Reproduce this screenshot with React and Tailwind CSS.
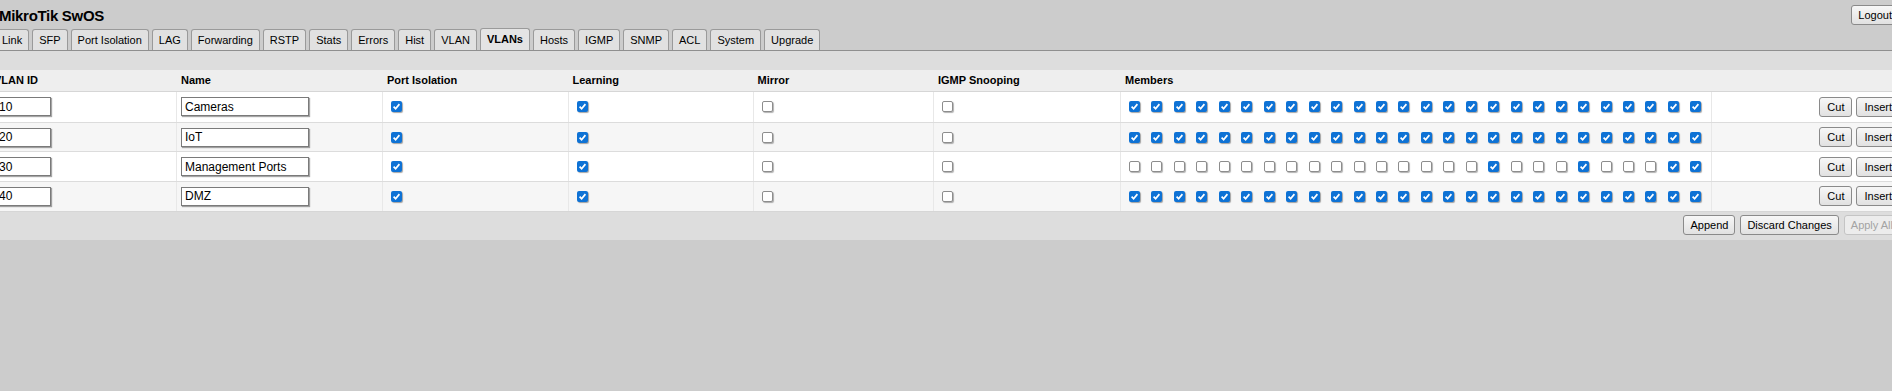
import React from "react";

const TABS = ["Link","SFP","Port Isolation","LAG","Forwarding","RSTP","Stats","Errors","Hist","VLAN","VLANs","Hosts","IGMP","SNMP","ACL","System","Upgrade"];

const ALL = Array(26).fill(true);
const ROW3 = Array.from({ length: 26 }, (_, i) => i === 16 || i === 20 || i === 24 || i === 25);

const ROWS = [
  { id: "10", name: "Cameras", members: ALL },
  { id: "20", name: "IoT", members: ALL },
  { id: "30", name: "Management Ports", members: ROW3 },
  { id: "40", name: "DMZ", members: ALL },
];

const GRID = "grid grid-cols-[187px_206px_185.5px_185px_180.5px_187px_591px_1fr]";

function Cb({ checked }) {
  if (checked) {
    return (
      <span className="inline-flex w-[11px] h-[11px] rounded-[2px] bg-[#0e72d5] shadow-[1px_1px_1px_rgba(0,0,0,0.35)] items-center justify-center shrink-0">
        <svg width="9" height="9" viewBox="0 0 9 9">
          <path d="M1.6 4.7 L3.6 6.7 L7.4 2.1" stroke="white" strokeWidth="1.7" fill="none" />
        </svg>
      </span>
    );
  }
  return (
    <span className="inline-block w-[11px] h-[11px] rounded-[2px] bg-white border border-[#8d8d8d] shadow-[1px_1px_1px_rgba(0,0,0,0.3)] shrink-0" />
  );
}

function Btn({ children, disabled, className = "" }) {
  return (
    <span
      className={
        "inline-flex items-center h-[20px] rounded-[3px] border text-[11px] leading-[18px] whitespace-nowrap " +
        (disabled
          ? "border-[#c4c4c4] text-[#a3a3a3] bg-[#ececec] "
          : "border-[#8a8a8a] text-black bg-gradient-to-b from-[#f7f7f7] to-[#e1e1e1] ") +
        className
      }
    >
      {children}
    </span>
  );
}

function Input({ value, w }) {
  return (
    <span
      className={
        "inline-flex items-center h-[19px] bg-white border border-[#7a7a7a] shadow-[1px_1px_1px_rgba(0,0,0,0.35)] px-[3px] text-[12px] whitespace-nowrap overflow-hidden " +
        w
      }
    >
      {value}
    </span>
  );
}

export default function App() {
  return (
    <div className="w-[1892px] h-[391px] overflow-hidden bg-[#cccccc] font-['Liberation_Sans',Arial,sans-serif] text-[11px] text-black">
      <div className="ml-[-11px] w-[1915px]">
        {/* title row */}
        <div className="flex justify-between items-start h-[29px] pl-[10px] pr-[5px]">
          <div className="mt-[7px] text-[15px] font-bold leading-[17px] tracking-[-0.3px]">MikroTik SwOS</div>
          <Btn className="mt-[5px] px-[6px]">Logout</Btn>
        </div>

        {/* tabs */}
        <div className="flex items-end gap-[3px] pl-[6px] h-[22px] border-b border-[#8f8f8f]">
          {TABS.map((t) => {
            const active = t === "VLANs";
            return (
              <div
                key={t}
                className={
                  "flex items-center px-[6px] border border-b-0 border-[#9a9a9a] rounded-t-[3px] whitespace-nowrap " +
                  (active ? "h-[22px] font-bold bg-[#e4e4e4]" : "h-[21px] bg-[#e1e1e1]")
                }
              >
                {t}
              </div>
            );
          })}
        </div>

        {/* content */}
        <div className="bg-[#dddddd] pt-[19px]">
          {/* header */}
          <div className={GRID + " h-[22px] bg-[#eeeeee] border-b border-[#d6d6d6] font-bold"}>
            {["VLAN ID", "Name", "Port Isolation", "Learning", "Mirror", "IGMP Snooping", "Members", ""].map((h, i) => (
              <div key={i} className="flex items-center pl-[5px] whitespace-nowrap">{h}</div>
            ))}
          </div>

          {ROWS.map((r, idx) => (
            <div
              key={r.id}
              className={
                GRID +
                " " +
                (idx > 0 ? "h-[29.7px] border-t border-[#dcdcdc] " : "h-[29.7px] ") +
                (idx % 2 === 1 ? "bg-[#f6f6f6]" : "bg-white")
              }
            >
              <div className="flex items-center pl-[6px]">
                <Input value={r.id} w="w-[56px]" />
              </div>
              <div className="flex items-center pl-[4px] border-l border-[#e8e8e8]">
                <Input value={r.name} w="w-[128px]" />
              </div>
              <div className="flex items-center pl-[8px] border-l border-[#e8e8e8]">
                <Cb checked />
              </div>
              <div className="flex items-center pl-[8px] border-l border-[#e8e8e8]">
                <Cb checked />
              </div>
              <div className="flex items-center pl-[8px] border-l border-[#e8e8e8]">
                <Cb checked={false} />
              </div>
              <div className="flex items-center pl-[8px] border-l border-[#e8e8e8]">
                <Cb checked={false} />
              </div>
              <div className="flex items-center pl-[4px] border-l border-[#e8e8e8]">
                {r.members.map((m, i) => (
                  <span key={i} className="flex w-[22.46px] pl-[4px] shrink-0">
                    <Cb checked={m} />
                  </span>
                ))}
              </div>
              <div className="flex items-center justify-end gap-[4px] pr-[4px] border-l border-[#e8e8e8]">
                <Btn className="px-[7px]">Cut</Btn>
                <Btn className="px-[7px]">Insert</Btn>
              </div>
            </div>
          ))}

          {/* bottom buttons */}
          <div className="flex justify-end gap-[5px] pr-[4px] pt-[3px] pb-[5px] border-t border-[#d6d6d6]">
            <Btn className="px-[6px]">Append</Btn>
            <Btn className="px-[6px]">Discard Changes</Btn>
            <Btn disabled className="px-[6px]">Apply All</Btn>
          </div>
        </div>
      </div>
    </div>
  );
}
